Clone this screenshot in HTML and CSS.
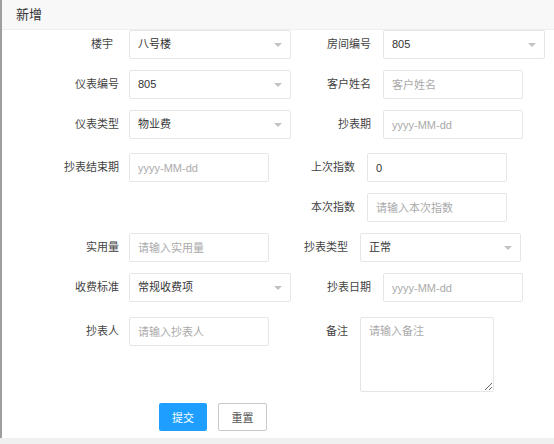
FILE: index.html
```html
<html>
    <head>
        <meta charset="utf-8">
        <link rel="stylesheet" href="styles.css">
    </head>
    <body>
        <div class="layer">
            <div class="layerTitle">新增</div>
            <form class="layerBody">
                <div class="row">
                    <div class="field">
                        <label class="label labelShort">楼宇</label>
                        <div class="select">八号楼</div>
                    </div>
                    <div class="field right">
                        <label class="label">房间编号</label>
                        <div class="select">805</div>
                    </div>
                </div>
                <div class="row">
                    <div class="field">
                        <label class="label">仪表编号</label>
                        <div class="select">805</div>
                    </div>
                    <div class="field right">
                        <label class="label">客户姓名</label>
                        <input type="text" class="input" placeholder="客户姓名">
                    </div>
                </div>
                <div class="row">
                    <div class="field">
                        <label class="label">仪表类型</label>
                        <div class="select">物业费</div>
                    </div>
                    <div class="field right">
                        <label class="label">抄表期</label>
                        <input type="text" class="input" placeholder="yyyy-MM-dd">
                    </div>
                </div>
                <div class="row rowSep">
                    <div class="field">
                        <label class="label">抄表结束期</label>
                        <input type="text" class="input" placeholder="yyyy-MM-dd">
                    </div>
                    <div class="field right shifted">
                        <label class="label">上次指数</label>
                        <input type="text" class="input" value="0">
                    </div>
                </div>
                <div class="row">
                    <div class="spacer"></div>
                    <div class="field right shifted">
                        <label class="label">本次指数</label>
                        <input type="text" class="input" placeholder="请输入本次指数">
                    </div>
                </div>
                <div class="row">
                    <div class="field">
                        <label class="label">实用量</label>
                        <input type="text" class="input" placeholder="请输入实用量">
                    </div>
                    <div class="field right narrow">
                        <label class="label">抄表类型</label>
                        <div class="select selectType">正常</div>
                    </div>
                </div>
                <div class="row">
                    <div class="field">
                        <label class="label">收费标准</label>
                        <div class="select">常规收费项</div>
                    </div>
                    <div class="field right">
                        <label class="label">抄表日期</label>
                        <input type="text" class="input" placeholder="yyyy-MM-dd">
                    </div>
                </div>
                <div class="row rowSep rowNote">
                    <div class="field">
                        <label class="label">抄表人</label>
                        <input type="text" class="input" placeholder="请输入抄表人">
                    </div>
                    <div class="field right narrow">
                        <label class="label">备注</label>
                        <textarea class="textarea" placeholder="请输入备注"></textarea>
                    </div>
                </div>
                <div class="buttons">
                    <button type="button" class="btn btnPrimary">提交</button>
                    <button type="reset" class="btn btnDefault">重置</button>
                </div>
            </form>
        </div>
        <div class="layerFoot"></div>
    </body>
</html>
```

FILE: styles.css
```css
/*Page frame*/
html, body{
    margin: 0;
    padding: 0;
    background-color: #ffffff;
}
body{
    width: 554px;
    height: 444px;
    overflow: hidden;
    font-family: "Liberation Sans", "Noto Sans CJK SC", sans-serif;
    font-size: 11px;
    color: #444444;
}
.layer{
    height: 438px;
    border-left: 2px solid #9e9e9e;
    box-sizing: border-box;
}
.layerTitle{
    height: 29px;
    line-height: 29px;
    padding-left: 14px;
    font-size: 13px;
    color: #333333;
    background-color: #f8f8f8;
    border-bottom: 1px solid #eeeeee;
}
.layerFoot{
    height: 6px;
    background-color: #f0f0f0;
}

/*Form rows*/
.row{
    display: flex;
    align-items: flex-start;
    margin-bottom: 11px;
}
.rowSep{
    padding-top: 3px;
}
.rowNote{
    padding-top: 4px;
}
.field{
    display: flex;
    align-items: flex-start;
    column-gap: 10px;
}
.label{
    width: 117px;
    line-height: 29px;
    text-align: right;
    color: #444444;
    white-space: nowrap;
}
.labelShort{
    width: 111px;
    padding-right: 6px;
}
.field.right{
    margin-left: 10px;
    column-gap: 12px;
}
.field.right .label{
    width: 70px;
}
.field.shifted{
    margin-left: 16px;
}
.field.narrow{
    margin-left: 9px;
}
.spacer{
    width: 267px;
}

/*Controls*/
.select, .input{
    width: 162px;
    height: 29px;
    line-height: 27px;
    padding: 0 8px;
    box-sizing: border-box;
    border: 1px solid #e6e6e6;
    border-radius: 2px;
    background-color: #ffffff;
    font-family: inherit;
    font-size: 11px;
    color: #333333;
    outline: none;
}
.select{
    position: relative;
}
.select::after{
    content: "";
    position: absolute;
    right: 8px;
    top: 12px;
    border-width: 4px 4px 0 4px;
    border-style: solid;
    border-color: #c2c2c2 transparent transparent transparent;
}
.selectType{
    width: 161px;
}
.input{
    width: 140px;
}
.input::placeholder, .textarea::placeholder{
    color: #aaaaaa;
}
.textarea{
    width: 134px;
    height: 75px;
    padding: 5px 8px;
    box-sizing: border-box;
    border: 1px solid #e6e6e6;
    border-radius: 2px;
    font-family: inherit;
    font-size: 11px;
    line-height: 17px;
    color: #333333;
    outline: none;
}

/*Buttons*/
.buttons{
    display: flex;
    column-gap: 11px;
    padding-left: 157px;
}
.btn{
    height: 28px;
    padding: 0;
    border-radius: 2px;
    font-family: inherit;
    font-size: 11px;
    cursor: pointer;
}
.btnPrimary{
    width: 48px;
    border: none;
    background-color: #1e9fff;
    color: #ffffff;
}
.btnDefault{
    width: 49px;
    border: 1px solid #c9c9c9;
    background-color: #ffffff;
    color: #555555;
}
```
